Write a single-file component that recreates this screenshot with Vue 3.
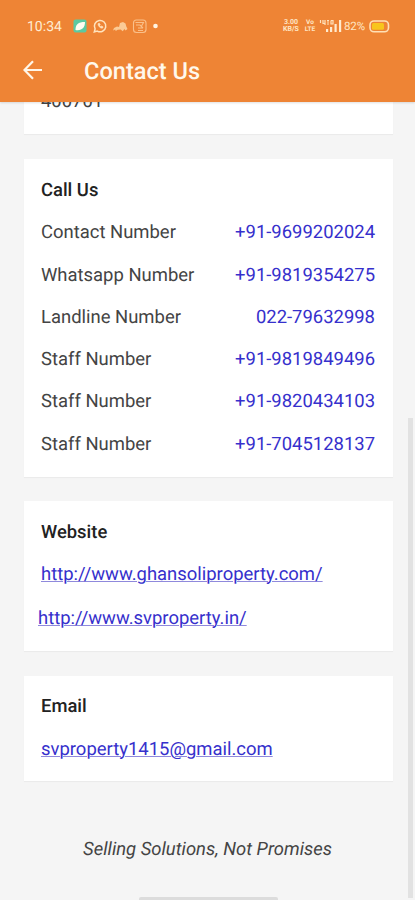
<template>
    <div class="screen">
        <header class="app-header">
            <div class="status-bar">
                <span class="time">10:34</span>
                <svg class="notifications" width="90" height="16" viewBox="0 0 90 16">
                    <rect x="0.5" y="1.5" width="13" height="13" rx="2" fill="#5cc9a0" />
                    <path d="M2.500 12C2.500 6.500 5 4 12 4C12 9.500 9 13 2.500 12Z" fill="#fffdf0" />
                    <g fill="none" stroke="#ffe3bd">
                        <path d="M21.300 14l.8-3.100a5.700 5.700 0 1 1 2.200 2.200Z" stroke-width="1.500" />
                        <path d="M25 5.800c.1 2.400 1.900 4.200 4.300 4.400l.8-1.300-1.500-.8-.8.7-1.200-1.300.6-.8-.8-1.400Z" fill="#ffe3bd" stroke-width=".7" />
                    </g>
                    <path d="M40 12.500l1-2.500 3-1.500 2 .5L47 5l3-1 2.500 1.500 .8 3 1.200 2.500-2 1.500-1-1.500-1.800 2.200-2-1.700-3 .3-2 1.200-.5-1.500Z" fill="#fbcb96" />
                    <g fill="none" stroke="#fac08a" stroke-width="1.100">
                        <rect x="60.500" y="2" width="12.500" height="12.500" rx="3" />
                        <path d="M62.500 4.500h8l-2 3.500M63 7h4l3 3M65 10h5M65 12.500h5" />
                    </g>
                    <circle cx="82.500" cy="8" r="2.300" fill="#fff4e2" />
                </svg>
                <div class="system">
                    <span class="stacked speed"><b>3.00</b><b>KB/S</b></span>
                    <span class="stacked volte"><b>Vo</b><b>LTE</b></span>
                    <svg class="signal" width="23" height="14" viewBox="0 0 23 14">
                        <g fill="none" stroke="#ffe3bd" stroke-width="1.200">
                            <path d="M1.500 1v3M4 1v3.500h2M6 1v5M8 1.500h2M8 3h2M8 5h2M12 1.500v4M12 1.500h2v3.500h-2" />
                        </g>
                        <path d="M7 10h2.200v3H7ZM11 8h2.200v5H11ZM15.500 5h2.200v8h-2.200ZM20 1h2.200v12h-2.200Z" fill="#ffeacd" />
                    </svg>
                    <span class="percent">82%</span>
                    <svg class="battery" width="21" height="13" viewBox="0 0 21 13">
                        <rect x="1" y="1" width="18.500" height="10.800" rx="4" fill="#ee8435" stroke="#ffe0b5" stroke-width="1.600" />
                        <rect x="3" y="3" width="12" height="6.800" rx="1.500" fill="#f8c51c" />
                    </svg>
                </div>
            </div>
            <div class="title-bar">
                <svg class="back" width="20" height="20" viewBox="0 0 20 20">
                    <path d="M10 1.200L1.500 10L10 18.800M1.500 10H19" fill="none" stroke="#fff6e8" stroke-width="2.200" />
                </svg>
                <h1>Contact Us</h1>
            </div>
        </header>

        <main class="content">
            <section class="card address">
                <div class="pincode">400701</div>
            </section>

            <section class="card call">
                <h2>Call Us</h2>
                <div v-for="(item, index) in numbers" :key="index" class="row">
                    <span>{{ item.label }}</span>
                    <a class="phone">{{ item.number }}</a>
                </div>
            </section>

            <section class="card website">
                <h2>Website</h2>
                <a class="link">http://www.ghansoliproperty.com/</a>
                <a class="link second">http://www.svproperty.in/</a>
            </section>

            <section class="card email">
                <h2>Email</h2>
                <a class="link">svproperty1415@gmail.com</a>
            </section>

            <p class="tagline">Selling Solutions, Not Promises</p>
        </main>

        <div class="scrollbar"></div>
        <div class="home-bar"></div>
    </div>
</template>

<script setup>
import { ref } from 'vue';

const numbers = ref([
    { label: 'Contact Number', number: '+91-9699202024' },
    { label: 'Whatsapp Number', number: '+91-9819354275' },
    { label: 'Landline Number', number: '022-79632998' },
    { label: 'Staff Number', number: '+91-9819849496' },
    { label: 'Staff Number', number: '+91-9820434103' },
    { label: 'Staff Number', number: '+91-7045128137' }
]);
</script>

<style>
body {
    margin: 0;
    background-color: #f5f5f5;
}
</style>

<style scoped>
.screen {
    position: relative;
    display: flex;
    flex-direction: column;
    width: 415px;
    height: 900px;
    overflow: hidden;
    background-color: #f5f5f5;
    font-family: Roboto, "Liberation Sans", sans-serif;
    color: #444;
    text-rendering: geometricPrecision;
}

.app-header {
    flex-shrink: 0;
    height: 102px;
    box-sizing: border-box;
    padding-top: 16px;
    background-color: #ee8435;
    color: #fff8ec;
    box-shadow: 0 1px 2px rgba(0, 0, 0, 0.12);
    z-index: 1;
}

.status-bar {
    display: flex;
    align-items: center;
    height: 20px;
    padding: 0 25px 0 27px;
}

.time {
    width: 46px;
    padding-top: 1px;
    font-size: 14px;
    color: #ffecd2;
}

.system {
    display: flex;
    align-items: center;
    margin-left: auto;
    color: #ffe6c4;
}

.stacked {
    display: flex;
    flex-direction: column;
    align-items: center;
    font-size: 7px;
}

.stacked b {
    height: 7px;
    line-height: 7px;
}

.speed {
    width: 20px;
}

.volte {
    width: 10px;
    margin: 0 4px 0 4px;
    font-size: 6.5px;
}

.percent {
    width: 23px;
    margin: 0 2px 0 2px;
    font-size: 11.5px;
    letter-spacing: -0.1px;
}

.title-bar {
    display: flex;
    align-items: center;
    height: 28px;
    margin-top: 20px;
    padding-left: 23px;
}

h1 {
    margin: 0 0 0 41px;
    padding-top: 1px;
    font-size: 23.6px;
    font-weight: 500;
}

.content {
    display: flex;
    flex-direction: column;
    padding: 0 22px 0 24px;
    font-size: 18.45px;
}

.card {
    box-sizing: border-box;
    margin-bottom: 25px;
    padding: 10px 18px 0 17px;
    background-color: #fff;
    box-shadow: 0 1px 1px rgba(0, 0, 0, 0.04);
}

.address {
    height: 32px;
    padding-top: 0;
}

.pincode {
    height: 20px;
    margin-top: -11px;
    line-height: 20px;
}

.call {
    height: 318px;
    margin-bottom: 24px;
}

.website {
    height: 150px;
}

.email {
    height: 105px;
    padding-top: 9px;
}

h2 {
    margin: 0;
    height: 42.3px;
    line-height: 44px;
    font-size: 18.4px;
    font-weight: 500;
    color: #222;
}

.row {
    display: flex;
    justify-content: space-between;
    height: 42.3px;
    line-height: 42.3px;
}

.phone,
.link {
    color: #3630cc;
}

.link {
    display: block;
    height: 43.5px;
    line-height: 43px;
    text-decoration: underline;
    text-decoration-thickness: 1px;
    text-decoration-color: #8f89dc;
}

.email .link {
    line-height: 44px;
}

.second {
    margin-left: -3px;
}

.tagline {
    margin: 31px 2px 0 0;
    line-height: 24px;
    text-align: center;
    font-style: italic;
}

.scrollbar {
    position: absolute;
    top: 418px;
    right: 2px;
    width: 5px;
    height: 480px;
    background-color: #e2e2e2;
}

.home-bar {
    position: absolute;
    bottom: 0;
    left: 139px;
    width: 139px;
    height: 3px;
    border-radius: 2px 2px 0 0;
    background-color: #dcdcdc;
}
</style>
